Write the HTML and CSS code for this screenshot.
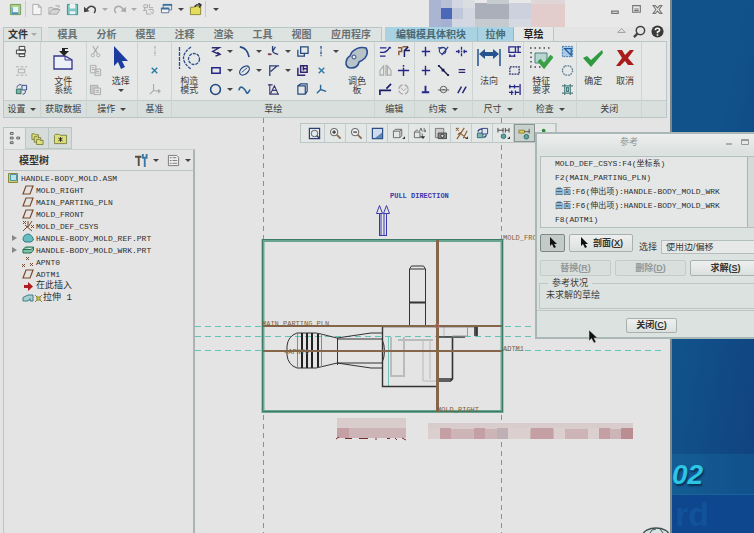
FILE: index.html
```html
<!DOCTYPE html>
<html lang="zh-CN">
<head>
    <meta charset="UTF-8">
    <meta name="viewport" content="width=device-width, initial-scale=1.0">
    <title>HANDLE-BODY_MOLD</title>
    <link rel="stylesheet" href="styles.css">
</head>
<body>
<div class="app">
    <header class="titlebar">
        <div class="quick">
            <button aria-label="窗口"><svg viewBox="0 0 14 14"><path fill="#a9cf7d" stroke="#6d9d5c" d="M1.500 1.500h11v11h-11z"/><path fill="#4b8bc4" d="M3 5h7v7H3z"/><path fill="#e8f3f5" d="M4 4h6v6H4z"/></svg></button>
            <span class="bar"></span>
            <button aria-label="新建"><svg viewBox="0 0 14 14"><path fill="#f4f4f2" stroke="#aaa" d="M3 1.500h6l3 3v8H3zM9 1.500v3h3"/></svg></button>
            <button aria-label="打开"><svg viewBox="0 0 14 14"><path fill="#d4d4d2" stroke="#aaa" d="M1 5h4l1 1h5v2M1 5v7h9l3-5H4l-3 5M8 3h4v2"/></svg></button>
            <button aria-label="保存"><svg viewBox="0 0 14 14"><path fill="#7cc6c4" stroke="#2f8f92" d="M1.500 1.500h11v11h-11z"/><path fill="#eef4f2" d="M4 1h6v5H4zM4 9h6v3H4z"/></svg></button>
            <button aria-label="撤消" class="drop"><svg viewBox="0 0 14 14"><path fill="none" stroke="#444" stroke-width="1.600" d="M3 7q3-5 7-3t1 7"/><path fill="#444" d="M0 4l6 5-6 1z"/></svg><i class="ghost"></i></button>
            <button aria-label="重做" class="drop"><svg viewBox="0 0 14 14"><path fill="none" stroke="#aaa" stroke-width="1.600" d="M11 7Q8 2 4 4t-1 7"/><path fill="#aaa" d="M14 4L8 9l6 1z"/></svg><i class="ghost"></i></button>
            <button aria-label="重新生成"><svg viewBox="0 0 14 14"><path fill="none" stroke="#aaa" d="M2 2h4v3H2zM8 1v4h4M1 8h4v4h5M7 7h5v4M3 5v3M9 9l3 3"/></svg></button>
            <button aria-label="窗口切换" class="drop"><svg viewBox="0 0 14 14"><path fill="#dfe8f0" stroke="#5d7396" d="M3.500 1.500h9v6h-9z"/><path fill="#f2f2f2" stroke="#5d7396" d="M1.500 5.500h8v5h-8z"/><path fill="#3d6f9d" d="M3 1h10v2H3zM1 5h9v2H1z"/></svg><i></i></button>
            <button aria-label="关闭窗口"><svg viewBox="0 0 14 14"><path fill="#e6dc5c" stroke="#8a8434" d="M1.500 4.500h4l1-1h6v9h-11z"/><path fill="none" stroke="#333" stroke-width="1.500" d="M6 4l2-2h4M10 0l3 2-2 3"/></svg></button>
            <span class="bar"></span>
            <button aria-label="自定义" class="more"><i></i></button>
        </div>
        <svg class="mosaic" viewBox="0 0 138 27">
            <path fill="#dadee0" d="M0 18h12v9H0zM34 0h12v8H34zM46 8h12v19H46z"/>
            <path fill="#a9b5d2" d="M0 0h12v8H0zM0 8h12v19H0z"/>
            <path fill="#b8c0d6" d="M12 0h11v8H12z"/>
            <path fill="#4d67b8" d="M12 8h11v11H12z"/>
            <path fill="#a5b0d2" d="M12 19h11v8H12z"/>
            <path fill="#bfc7da" d="M23 8h11v11H23z"/>
            <path fill="#d2d7e2" d="M23 0h11v8H23zM23 19h23v8H23zM34 8h12v11H34z"/>
            <path fill="#abafb9" d="M46 3h34v16H46z"/>
            <path fill="#c6cbd0" d="M58 0h22v4H58zM46 19h34v8H46z"/>
            <path fill="#cdd1dd" d="M80 3h22v16H80z"/>
            <path fill="#d6d9e2" d="M80 19h22v8H80z"/>
            <path fill="#e2cccc" d="M102 3h34v24h-34z"/>
            <path fill="#dfd7d7" d="M102 0h34v4h-34z"/>
        </svg>
        <div class="winbtns">
            <button aria-label="最小化"><svg viewBox="0 0 10 10"><path fill="none" stroke="#777" d="M1.500 6.500h6v2h-6z"/></svg></button>
            <button aria-label="还原"><svg viewBox="0 0 10 10"><path fill="none" stroke="#777" d="M1.500 1.500h7v6h-7zM3 4.500h4M3 6h4"/></svg></button>
            <button aria-label="关闭"><svg viewBox="0 0 10 10"><path fill="none" stroke="#777" d="M1 1.500h2l2 2 2-2h2L6.500 5 9 8.500H7l-2-2-2 2H1L3.500 5z"/></svg></button>
        </div>
    </header>

    <nav class="tabs">
        <button class="file">文件<i class="ghost"></i></button>
        <button>模具</button>
        <button>分析</button>
        <button>模型</button>
        <button>注释</button>
        <button>渲染</button>
        <button>工具</button>
        <button>视图</button>
        <button class="last">应用程序</button>
        <button class="hl wide">编辑模具体积块</button>
        <button class="hl">拉伸</button>
        <button class="active">草绘</button>
        <div class="help">
            <button aria-label="折叠"><svg viewBox="0 0 14 14"><path fill="none" stroke="#999" d="M3 8l4-4 4 4z"/></svg></button>
            <button aria-label="搜索"><svg viewBox="0 0 14 14"><circle cx="8" cy="6" r="4.500" fill="none" stroke="#444" stroke-width="1.600"/><path stroke="#444" stroke-width="2.500" d="M1 13l4-4"/></svg></button>
            <button aria-label="帮助"><svg viewBox="0 0 14 14"><circle cx="7" cy="7" r="6.500" fill="#3a3a3a"/><path fill="none" stroke="#fff" stroke-width="1.700" d="M4.500 5.500Q5 3.500 7 3.500t2.400 1.800Q9 7 7 7.500V9M7 10v1.600"/></svg></button>
        </div>
    </nav>

    <section class="ribbon">
        <div class="group">
            <div class="tools">
                <div class="icons">
                    <button aria-label="草绘设置"><svg viewBox="0 0 14 14"><path fill="#f2f2f2" stroke="#333" d="M4.500 1.500h6v4h-6zM1.500 5.500h10l-1 4h-9zM4.500 9.500h6v3h-6z"/></svg></button>
                    <button aria-label="参考"><svg viewBox="0 0 14 14"><path fill="none" stroke="#aaa" d="M1 3h3m2 0h3m2 0h2M3.500 5.500h7v4h-7zM1 12h3m2 0h3m2 0h2"/></svg></button>
                    <button aria-label="草绘视图"><svg viewBox="0 0 14 14"><path fill="#7fb3a4" stroke="#2e6b63" d="M1.500 6.500h5v5h-5z"/><path fill="#dce6f2" stroke="#31417c" d="M7.500 2.500h5v5h-5z"/><path fill="none" stroke="#2c4c80" d="M2 5q1-4 5-3M11 8q1 4-3 4"/></svg></button>
                </div>
            </div>
            <div class="caption">设置<i></i></div>
        </div>
        <div class="group">
            <div class="tools">
                <button class="big"><svg viewBox="0 0 24 24"><path fill="#eef0f8" stroke="#35358a" stroke-width="1.300" d="M3 10h11l7 4v9H3z"/><path fill="none" stroke="#35358a" d="M14 10v4h7"/><path fill="#222" d="M8 5h10l-5 5zM11 2h6v1h-3v3h-3z"/></svg>文件<br>系统</button>
            </div>
            <div class="caption">获取数据</div>
        </div>
        <div class="group">
            <div class="tools">
                <div class="icons">
                    <button aria-label="剪切"><svg viewBox="0 0 14 14"><path fill="none" stroke="#aaa" stroke-width="1.200" d="M4 1l5 8M10 1L5 9"/><circle cx="4" cy="11" r="1.700" fill="none" stroke="#aaa"/><circle cx="10" cy="11" r="1.700" fill="none" stroke="#aaa"/></svg></button>
                    <button aria-label="复制"><svg viewBox="0 0 14 14"><path fill="#e6e6e6" stroke="#aaa" d="M1.500 1.500h6v8h-6zM3 4h3M3 6h3M6.500 5.500h6v7h-6zM8 8h3M8 10h3"/></svg></button>
                    <button aria-label="粘贴"><svg viewBox="0 0 14 14"><path fill="#c8c8c8" stroke="#aaa" d="M1.500 2.500h8v9h-8z"/><path fill="#e6e6e6" stroke="#aaa" d="M5.500 5.500h7v7h-7zM7 8h4M7 10h4"/></svg></button>
                </div>
                <button class="big"><svg viewBox="0 0 24 24"><path fill="#1c3ca0" d="M5 0v20l4-4 3 7 4-2-3-6h6z"/></svg>选择<i></i></button>
            </div>
            <div class="caption">操作<i></i></div>
        </div>
        <div class="group">
            <div class="tools">
                <div class="icons">
                    <button aria-label="中心线"><svg viewBox="0 0 14 14"><path stroke="#999" stroke-dasharray="3 1 1 1" d="M7.500 1v12"/></svg></button>
                    <button aria-label="点"><svg viewBox="0 0 14 14"><path stroke="#2a7aa8" stroke-width="1.500" d="M4 4l6 6M10 4l-6 6"/></svg></button>
                    <button aria-label="坐标系"><svg viewBox="0 0 14 14"><path fill="none" stroke="#aaa" stroke-width="1.200" d="M6 1v7l7 1M11 7l2 2-2 2M6 8l-4 4"/></svg></button>
                </div>
            </div>
            <div class="caption">基准</div>
        </div>
        <div class="group">
            <div class="tools">
                <button class="big"><svg viewBox="0 0 24 24"><path fill="none" stroke="#2b4f8c" stroke-width="1.300" stroke-dasharray="4 1" d="M2.500 1v22"/><path fill="none" stroke="#2b4f8c" stroke-width="1.300" stroke-dasharray="3 1" d="M14 1Q-1 12 14 23"/><circle cx="17" cy="13" r="5.500" fill="none" stroke="#2b4f8c" stroke-width="1.300" stroke-dasharray="3 1"/></svg>构造<br>模式</button>
                <div class="icons sketch">
                    <button aria-label="线" class="drop"><svg viewBox="0 0 14 14"><path fill="none" stroke="#2a2a6e" stroke-width="1.500" d="M3 3h8L4 7l7 3M9 8l3 2-5 2"/></svg><i></i></button>
                    <button aria-label="矩形" class="drop"><svg viewBox="0 0 14 14"><path fill="none" stroke="#26268a" stroke-width="1.600" d="M3 4h9v6H3z"/></svg><i></i></button>
                    <button aria-label="圆" class="drop"><svg viewBox="0 0 14 14"><circle cx="7" cy="7" r="5.300" fill="none" stroke="#254a80" stroke-width="1.700"/></svg><i></i></button>
                    <button aria-label="弧" class="drop"><svg viewBox="0 0 14 14"><path fill="none" stroke="#254a80" stroke-width="1.700" d="M2 2q8 1 10 11"/></svg><i></i></button>
                    <button aria-label="椭圆" class="drop"><svg viewBox="0 0 14 14"><ellipse cx="7" cy="7" rx="6" ry="3.800" transform="rotate(-40 7 7)" fill="none" stroke="#254a80" stroke-width="1.400"/><path stroke="#254a80" d="M4 9l6-5"/></svg><i></i></button>
                    <button aria-label="样条"><svg viewBox="0 0 14 14"><path fill="none" stroke="#2a6598" stroke-width="1.800" d="M1 8q1-5 4-3t4 5 4-3"/></svg></button>
                    <button aria-label="圆角" class="drop"><svg viewBox="0 0 14 14"><path fill="none" stroke="#2b3f78" stroke-width="1.400" d="M6 1v5q0 3 6 4M1 10h4M9 2l-3 5"/><path fill="#8c4646" d="M1 9h3v2H1z"/></svg><i></i></button>
                    <button aria-label="倒角" class="drop"><svg viewBox="0 0 14 14"><path fill="none" stroke="#2b3f78" stroke-width="1.400" d="M3 13V2h10M4 8l7-6"/></svg><i></i></button>
                    <button aria-label="文本"><svg viewBox="0 0 14 14"><path fill="none" stroke="#3b3b72" stroke-width="1.200" d="M3 1v11h10M4 11l4-8 4 9M5 8h6M1 2h5"/></svg></button>
                    <button aria-label="偏移"><svg viewBox="0 0 14 14"><path fill="none" stroke="#254a80" stroke-width="1.400" d="M2 5v7h7V9M5 2h8v7H5z"/></svg></button>
                    <button aria-label="加厚"><svg viewBox="0 0 14 14"><path fill="none" stroke="#32246e" stroke-width="1.600" d="M2 4v8h8M5 2h7v7H5zM7 5h5M8 2v5"/></svg></button>
                    <button aria-label="投影"><svg viewBox="0 0 14 14"><path fill="none" stroke="#254a80" stroke-width="1.300" d="M2 3h8v9H2zM2 3l3-2h7v8l-2 3"/></svg></button>
                    <button aria-label="构造中心线" class="drop"><svg viewBox="0 0 14 14"><path stroke="#254a80" stroke-width="1.400" stroke-dasharray="3 1 1 1" d="M6.500 1v12"/></svg><i></i></button>
                    <button aria-label="构造点"><svg viewBox="0 0 14 14"><path stroke="#2a7aa8" stroke-width="1.500" d="M4 4l6 6M10 4l-6 6"/></svg></button>
                    <button aria-label="构造坐标系"><svg viewBox="0 0 14 14"><path fill="none" stroke="#2a6598" stroke-width="1.500" d="M6 2v5l6 2M6 7l-4 4"/></svg></button>
                </div>
                <button class="big"><svg viewBox="0 0 24 24"><path fill="#b7c2c9" stroke="#2b4f8c" stroke-width="1.600" d="M7 6Q13 0 21 2q3 5-1 10-2 2-6 4-1 6-8 6-4 0-5-4 0-6 4-8z"/><circle cx="9" cy="11" r="2" fill="#e8eef2" stroke="#2b4f8c"/></svg>调色<br>板</button>
            </div>
            <div class="caption">草绘</div>
        </div>
        <div class="group">
            <div class="tools">
                <div class="icons">
                    <button aria-label="修改"><svg viewBox="0 0 14 14"><path fill="none" stroke="#26268a" stroke-width="1.400" d="M1 3h7M10 3h3M1 8h4q4-1 7-6M1 12h6"/></svg></button>
                    <button aria-label="镜像"><svg viewBox="0 0 14 14"><path fill="none" stroke="#aaa" stroke-width="1.200" d="M1 12V7l4-5v10zM13 12V7L9 2v10zM7.500 1v12"/></svg></button>
                    <button aria-label="分割"><svg viewBox="0 0 14 14"><path fill="none" stroke="#1c1c6a" stroke-width="1.800" d="M1 13V8h7M13 1L8 6M5 8h8"/></svg></button>
                    <button aria-label="删除段"><svg viewBox="0 0 14 14"><path fill="none" stroke="#8a5a38" stroke-width="1.600" d="M1 3h4v4H2v4M6 2l6 0"/><path fill="none" stroke="#1c1c6a" stroke-width="1.600" d="M8 13V6h6M12 2l-4 4"/></svg></button>
                    <button aria-label="拐角"><svg viewBox="0 0 14 14"><path fill="none" stroke="#26268a" stroke-width="1.500" d="M1 7h12M7 4v9M7 1v2"/></svg></button>
                    <button aria-label="旋转"><svg viewBox="0 0 14 14"><circle cx="7" cy="7" r="5" fill="none" stroke="#aaa" stroke-width="1.300" stroke-dasharray="6 2"/><path fill="none" stroke="#aaa" d="M4 5l3 3 3-2"/></svg></button>
                </div>
            </div>
            <div class="caption">编辑</div>
        </div>
        <div class="group">
            <div class="tools">
                <div class="icons">
                    <button aria-label="竖直"><svg viewBox="0 0 14 14"><path stroke="#26268a" stroke-width="1.500" d="M7 2v10M3 7h9"/></svg></button>
                    <button aria-label="水平"><svg viewBox="0 0 14 14"><path stroke="#26268a" stroke-width="1.500" d="M7 2v10M3 7h9"/></svg></button>
                    <button aria-label="垂直"><svg viewBox="0 0 14 14"><path stroke="#26268a" stroke-width="2" d="M7 3v7M3 10h8"/></svg></button>
                    <button aria-label="相切"><svg viewBox="0 0 14 14"><circle cx="6" cy="6" r="3.500" fill="none" stroke="#2b3f88" stroke-width="1.300"/><path stroke="#2b3f88" stroke-width="1.300" d="M5 11l7-9M1 3h5"/></svg></button>
                    <button aria-label="中点"><svg viewBox="0 0 14 14"><path stroke="#1c1c4a" stroke-width="1.500" d="M2 2l10 10"/><path fill="#1c1c4a" d="M5 5h3v3H5zM1 1h2v2H1zM11 11h2v2h-2z"/></svg></button>
                    <button aria-label="重合"><svg viewBox="0 0 14 14"><circle cx="7" cy="7" r="3.500" fill="none" stroke="#555"/><path stroke="#555" d="M1 7.500h12M6 7h2"/></svg></button>
                    <button aria-label="对称"><svg viewBox="0 0 14 14"><path stroke="#26268a" stroke-width="1.400" d="M1 7h4M9 7h4M7 2v3M7 6v2M7 9v3M4 5v4M10 5v4"/></svg></button>
                    <button aria-label="相等"><svg viewBox="0 0 14 14"><path stroke="#26266a" stroke-width="1.500" d="M4 6h7M4 9h7"/></svg></button>
                    <button aria-label="平行"><svg viewBox="0 0 14 14"><path stroke="#26266a" stroke-width="1.600" d="M3 11l4-7M8 11l4-7"/></svg></button>
                </div>
            </div>
            <div class="caption">约束<i></i></div>
        </div>
        <div class="group">
            <div class="tools">
                <button class="big"><svg viewBox="0 0 24 24"><path stroke="#26528f" stroke-width="1.500" d="M1 3v17M23 3v17"/><path fill="#26528f" d="M2 8l6-5v3h8V3l6 5-6 5v-3H8v3z"/></svg>法向</button>
                <div class="icons">
                    <button aria-label="周长"><svg viewBox="0 0 14 14"><path fill="none" stroke="#26268a" stroke-width="1.400" d="M1 2h7v6H1zM11 1v7M9 2h5M9 8h5M1 12h7M2 10v3M7 10v3"/></svg></button>
                    <button aria-label="参考尺寸"><svg viewBox="0 0 14 14"><path fill="none" stroke="#26266a" stroke-width="1.400" stroke-dasharray="2 1" d="M2 3h10v8H2z"/></svg></button>
                    <button aria-label="基线"><svg viewBox="0 0 14 14"><path fill="none" stroke="#26268a" stroke-width="1.400" d="M13 1v12M1 4h11M2 2v4M7 2v4M1 10h5M8 10h4M4 8v5M8 8v5"/></svg></button>
                </div>
            </div>
            <div class="caption">尺寸<i></i></div>
        </div>
        <div class="group">
            <div class="tools">
                <button class="big"><svg viewBox="0 0 24 24"><path fill="none" stroke="#444" stroke-width="1.500" stroke-dasharray="1.500 3" d="M1 2h21M1 21h12M2 6v14"/><path fill="#b9d5d0" stroke="#4d8080" d="M6 7h12v10H6z"/><path fill="none" stroke="#3aa046" stroke-width="4" d="M10 14l5 6 8-10"/></svg>特征<br>要求</button>
                <div class="icons">
                    <button aria-label="重叠几何"><svg viewBox="0 0 14 14"><path fill="#a9c8e4" stroke="#3b78b0" stroke-dasharray="2 1" d="M1.500 1.500h11v11h-11z"/><path fill="none" stroke="#1d5c9c" stroke-width="1.300" d="M4 4l7 7V4z"/></svg></button>
                    <button aria-label="突出开放端"><svg viewBox="0 0 14 14"><path fill="none" stroke="#5b7b92" stroke-width="1.300" stroke-dasharray="2 1" d="M4 2h6l3 5-3 5H4L1 7z"/></svg></button>
                    <button aria-label="着色封闭环"><svg viewBox="0 0 14 14"><path fill="none" stroke="#4d8080" stroke-width="1.300" d="M1 3h12M1 11h12M4 1v12M10 1v12M6 5h2v4H6z"/></svg></button>
                </div>
            </div>
            <div class="caption">检查<i></i></div>
        </div>
        <div class="group">
            <div class="tools">
                <button class="big"><svg viewBox="0 0 24 24"><path fill="#2f9a40" d="M2 12l4-2 4 4L21 4l1 3-12 14z"/></svg>确定</button>
                <button class="big"><svg viewBox="0 0 24 24"><path fill="#a81c1c" d="M4 4h5l3 5 5-5h4l-6 8 6 7h-6l-3-4-5 5H3l6-8z"/></svg>取消</button>
            </div>
            <div class="caption">关闭</div>
        </div>
        <div class="group">
            <div class="tools"></div>
            <div class="caption"></div>
        </div>
    </section>

    <main class="work">
        <aside class="navigator">
            <div class="navtabs">
                <button class="on" aria-label="模型树"><svg viewBox="0 0 14 14"><path fill="none" stroke="#555" d="M2.500 .5h3v2h-3zM2.500 5.500h3v2h-3zM2.500 10.500h3v2h-3zM9.500 5.500h3v2h-3z"/></svg></button>
                <button aria-label="文件夹浏览器"><svg viewBox="0 0 14 14"><path fill="#dce07a" stroke="#7c8040" d="M1 2h3l1 1h3v5H1z"/><path fill="#dce07a" stroke="#7c8040" d="M3.500 5h3l1 1h3v5h-7z"/><path fill="#dce07a" stroke="#7c8040" d="M6 8h3l1 1h3v4.500H6z"/></svg></button>
                <button aria-label="收藏夹"><svg viewBox="0 0 14 14"><path fill="#dce07a" stroke="#7c8040" d="M.5 3.500l1-1h4l1 1h7v9H.5z"/><path stroke="#222" d="M7 5.500v5M4.800 6.500l4.400 3M9.200 6.500l-4.400 3"/></svg></button>
            </div>
            <div class="navhead">
                <h2>模型树</h2>
                <button aria-label="设置" class="drop"><svg viewBox="0 0 14 14"><path fill="none" stroke="#5a4b3c" stroke-width="2" d="M0 3h7M4 3v10"/><path fill="none" stroke="#3a7aa5" stroke-width="2" d="M8.500 0v4h4V0M10.500 4v10"/></svg><i></i></button>
                <button aria-label="显示" class="drop"><svg viewBox="0 0 14 14"><path fill="#eee" stroke="#777" d="M1.500 1.500h9l2 2v9h-11zM3 4h2M6 4h4M3 7h2M6 7h5M3 10h2M6 10h5"/></svg><i></i></button>
            </div>
            <ul class="tree">
                <li class="root"><svg viewBox="0 0 12 12"><path fill="#d8cf62" stroke="#8a8a3c" d="M1.500 1.500h9v9h-9z"/><path fill="#b8e2ea" stroke="#4b97a0" d="M3.500 2.500h6v6h-6z"/></svg>HANDLE-BODY_MOLD.ASM</li>
                <li><svg viewBox="0 0 12 12"><path fill="none" stroke="#7a4a28" stroke-width="1.200" d="M4 2h7L8 10H1z"/></svg>MOLD_RIGHT</li>
                <li><svg viewBox="0 0 12 12"><path fill="none" stroke="#7a4a28" stroke-width="1.200" d="M4 2h7L8 10H1z"/></svg>MAIN_PARTING_PLN</li>
                <li><svg viewBox="0 0 12 12"><path fill="none" stroke="#7a4a28" stroke-width="1.200" d="M4 2h7L8 10H1z"/></svg>MOLD_FRONT</li>
                <li><svg viewBox="0 0 12 12"><path fill="none" stroke="#7a4a28" d="M1 1l3 3M4 1L1 4M6 1v5L1 11M3 5l7 6M10 1L6 7M9 5l3 3M12 5L9 8"/></svg>MOLD_DEF_CSYS</li>
                <li class="closed"><svg viewBox="0 0 12 12"><path fill="#66bcc2" stroke="#2f7c80" d="M1 8q0-6 6-6 4 2 4.500 6L9 10H3z"/></svg>HANDLE-BODY_MOLD_REF.PRT</li>
                <li class="closed"><svg viewBox="0 0 12 12"><path fill="#7cc4a4" stroke="#2d6e58" d="M1 5.500L3.500 3h8v3L9 9H1zM1 5.500h8l2.500-2.500"/></svg>HANDLE-BODY_MOLD_WRK.PRT</li>
                <li><svg viewBox="0 0 12 12"><path fill="none" stroke="#7a4a28" d="M4 1l3 3M7 1L4 4M0 8l3 3M3 8l-3 3M8 7l3 3M11 7l-3 3"/></svg>APNT0</li>
                <li><svg viewBox="0 0 12 12"><path fill="none" stroke="#7a4a28" stroke-width="1.200" d="M4 2h7L8 10H1z"/></svg>ADTM1</li>
                <li class="cn"><svg viewBox="0 0 12 12"><path fill="#b01c22" d="M2 5h4V2l5 4.500L6 11V8H2z"/></svg>在此插入</li>
                <li class="cn feat"><svg viewBox="0 0 12 12"><path fill="#a9cfd2" stroke="#3d7f88" d="M1 5.500L6 3h5v6H8V6.500L6 9H1z"/></svg><svg class="star" viewBox="0 0 7 7"><path fill="#d9d34e" stroke="#8a8430" d="M2 2h3v3H2z"/><path stroke="#8a8430" d="M0 0l2 2M7 0L5 2M0 7l2-2M7 7L5 5"/></svg>拉伸 1</li>
            </ul>
        </aside>

        <section class="canvas">
            <svg class="scene" viewBox="195 118 475 415" preserveAspectRatio="xMinYMin meet">
                <g fill="none" stroke="#4fb08c" stroke-dasharray="5 4">
                    <path d="M263.500 118v415M501.500 118v415"/>
                    <path stroke="#62c4b4" stroke-dasharray="6 4" d="M195 326.500h468M195 336.500h368M195 350.500h468"/>
                </g>
                <path fill="none" stroke="#6aa590" stroke-width="3" d="M263 240.500h239v171H263z"/>
                <path fill="none" stroke="#3d7a68" d="M262.500 239.500h240v172h-240z"/>

                <g fill="none" stroke="#b8bcbc">
                    <path d="M388.500 337v49" stroke="#72c4b8"/>
                    <path stroke-width="2" d="M391 337v39h13v-39M398 340h35"/>
                    <path d="M423 341v40h14M430 341v38M444 326v10"/>
                </g>
                <g fill="none" stroke="#333">
                    <path d="M409.500 326v-57l2-3h12l2 3v57M410 269h15"/>
                    <path stroke-width="2" d="M410 302.500h15"/>
                    <path stroke-width="1.400" d="M437.500 386.500h-55v-60h94v9"/>
                    <path d="M382 333h-11l-34 5-16-4-5-1h-19q-9 3-10 13v9q1 10 10 13h19l17-4 4-1 34 5h11M337.500 338v27M382 339h-45M382 363h-45M382 339q5 12 0 24"/>
                    <path stroke="#222" stroke-width="2" d="M302 333v35M307 333v35M312 333v35M318 334v33"/>
                    <path stroke="#888" d="M297.500 333v35M321.500 334v33"/>
                    <path stroke-width="1.600" d="M438 337h27M452.500 338v41l-2 2H438M438 379h14M475 326v10M477 327v9"/>
                    <path d="M467.500 327v9h-15" stroke="#999"/>
                </g>
                <g fill="none" stroke="#85664a" stroke-width="2">
                    <path d="M263 326h239M263 351h239"/>
                    <path d="M437.500 240v172" stroke-width="3"/>
                </g>
                <circle cx="437" cy="326" r="2" fill="none" stroke="#c46a6a"/>
                <g fill="none" stroke="#3a3aae">
                    <path d="M379.500 235.500v-22h-3l3-8 3 8h-3M386.500 235.500v-22h-3l3-8 3 8h-3M379 235.500h8M381 213v22M384 213v22"/>
                </g>
                <g class="tag">
                    <text class="pull" x="390" y="198">PULL DIRECTION</text>
                    <text x="503" y="240">MOLD_FRONT</text>
                    <text x="262" y="326">MAIN_PARTING_PLN</text>
                    <text x="503" y="351">ADTM1</text>
                    <text x="284" y="354">×APNT0</text>
                    <text x="437" y="412">MOLD_RIGHT</text>
                </g>

                <path fill="#d9cccd" d="M337 418h69v10h-69zM428 423h205v7H428z"/>
                <path fill="#cdb4b6" d="M337 428h69v10h-69zM428 429h205v10H428z"/>
                <path fill="#c4a0a4" d="M337 428h12v10h-12zM440 428h11v11h-11zM474 428h11v11h-11zM531 428h22v11h-22zM599 428h11v11h-11z"/>
                <path fill="#dccfd0" d="M428 429h12v10h-12zM508 428h22v11h-22zM554 428h11v11h-11zM588 428h11v11h-11z"/>
                <path fill="#b98d92" d="M621 428h12v11h-12z"/>
                <path fill="#bfb0b5" d="M497 428h11v11h-11z"/>
                <path fill="none" stroke="#7a2c30" d="M336 439l3-2M345 438.500h7M359 438.500h9M376 438v2M387 438.500h3M395 438l2 2M402 438l4 2"/>

                <ellipse cx="656" cy="535" rx="13" ry="7" fill="#d8e2e2" stroke="#3d5252" stroke-width="1.500"/>
                <path fill="none" stroke="#3d5252" d="M650 533l2-3 4-1M660 529l3 4"/>
            </svg>
            <div class="viewbar">
                <button aria-label="重新调整"><svg viewBox="0 0 14 14"><path fill="none" stroke="#2c3f78" stroke-width="1.300" d="M1.500 1.500h11v11h-11z"/><circle cx="7" cy="7" r="3.500" fill="#dfe9f0" stroke="#555"/><path stroke="#2c3f78" stroke-width="1.500" d="M9.500 9.500l3 3"/></svg></button>
                <button aria-label="放大"><svg viewBox="0 0 14 14"><circle cx="5.500" cy="5.500" r="4" fill="#eef0f0" stroke="#555"/><path stroke="#333" stroke-width="1.300" d="M3.500 5.500h4M5.500 3.500v4"/><path stroke="#8a6a48" stroke-width="2" d="M8.500 8.500l4 4"/></svg></button>
                <button aria-label="缩小"><svg viewBox="0 0 14 14"><circle cx="5.500" cy="5.500" r="4" fill="#eef0f0" stroke="#555"/><path stroke="#333" stroke-width="1.300" d="M3.500 5.500h4"/><path stroke="#8a6a48" stroke-width="2" d="M8.500 8.500l4 4"/></svg></button>
                <button aria-label="重画"><svg viewBox="0 0 14 14"><path fill="#cfdcec" stroke="#2c4f88" stroke-width="1.300" d="M1.500 1.500h11v11h-11z"/><path fill="#5d86b8" d="M12 6v6H4z"/></svg></button>
                <button aria-label="显示样式"><svg viewBox="0 0 14 14"><path fill="none" stroke="#666" d="M1.500 4.500h7v7h-7zM1.500 4.500l2-2h7v7l-2 2M8.500 4.500l2-2"/><path fill="#333" d="M11 13h3v-3z"/></svg></button>
                <button aria-label="已命名视图"><svg viewBox="0 0 14 14"><path fill="none" stroke="#666" d="M1.500 5.500h6v6h-6zM1.500 5.500l2-2h2M10 7v4H7M7 5l1.500-4L10 5M12 1v4h1.500V3"/><path fill="#333" d="M8 10h5l-2 3z"/></svg></button>
                <button aria-label="视图管理器"><svg viewBox="0 0 14 14"><path fill="#ccc" stroke="#777" d="M1.500 1.500h9v10h-9z"/><path fill="#888" stroke="#444" d="M4.500 6.500h9v6h-9z"/><circle cx="9" cy="9.500" r="1.800" fill="#ddd" stroke="#333"/></svg></button>
                <button aria-label="基准显示"><svg viewBox="0 0 14 14"><path fill="none" stroke="#8c5a2c" stroke-width="1.200" d="M1 1l3 3M4 1L1 4M10 1L2 13M5 6l7 6M13 4L9 12M3 8l3-2"/><path fill="#333" d="M11 13h3v-3z"/></svg></button>
                <button aria-label="草绘视图方向"><svg viewBox="0 0 14 14"><path fill="#7fb3b4" stroke="#2e6b73" d="M1.500 6.500h6v5h-6z"/><path fill="#dce6f2" stroke="#31417c" d="M6.500 1.500h6v6h-6z"/><path fill="none" stroke="#31417c" stroke-width="1.300" d="M2 5q1-3 5-3M8 11q3 0 3-3"/></svg></button>
                <button aria-label="草绘器显示"><svg viewBox="0 0 14 14"><path fill="none" stroke="#444" d="M1 1v5M1 3.500h6M6.500 1v5M9 1v5M9 3.500h4M13 1v5"/><circle cx="7" cy="10" r="2.500" fill="#5fa39a" stroke="#2d6e68"/><path fill="#333" d="M11 13h3v-3z"/></svg></button>
                <button aria-label="注释显示" class="on"><svg viewBox="0 0 14 14"><path fill="#e8d35a" stroke="#8a7b30" d="M1 3.500h6v3H1z"/><path stroke="#555" d="M7 5h6M12 2v5"/><circle cx="9" cy="10.500" r="2.500" fill="#5fa39a" stroke="#2d6e68"/></svg></button>
                <button aria-label="旋转中心"><svg viewBox="0 0 14 14"><circle cx="5" cy="4" r="2" fill="#2f8a3c"/><path stroke="#2f8a3c" stroke-width="1.400" d="M5 5v4M7 8h5"/></svg></button>
            </div>
        </section>
    </main>
</div>

<aside class="desktop">
    <div class="band"><strong>02</strong></div>
    <span class="word">rd</span>
</aside>

<form class="dialog">
    <header>参考
        <span class="dlgbtns">
            <button type="button" aria-label="最小化"><svg viewBox="0 0 10 10"><path stroke="#999" stroke-width="1.500" d="M2 7h6"/></svg></button>
            <button type="button" aria-label="最大化"><svg viewBox="0 0 10 10"><path fill="none" stroke="#999" d="M1.500 2.500h7v5h-7zM1 3.500h8"/></svg></button>
        </span>
    </header>
    <div class="list">
        <ul>
            <li>MOLD_DEF_CSYS:F4(坐标系)</li>
            <li>F2(MAIN_PARTING_PLN)</li>
            <li>曲面:F6(伸出项):HANDLE-BODY_MOLD_WRK</li>
            <li>曲面:F6(伸出项):HANDLE-BODY_MOLD_WRK</li>
            <li>F8(ADTM1)</li>
        </ul>
        <div class="scroll"></div>
    </div>
    <div class="pick">
        <button type="button" class="arrow" aria-label="选择参考"><svg viewBox="0 0 10 12"><path fill="#111" d="M2 0v9l2-2 2 4 2-1-2-3h3z"/></svg></button>
        <button type="button" class="sec"><svg viewBox="0 0 10 12"><path fill="#111" d="M2 0v9l2-2 2 4 2-1-2-3h3z"/></svg><span>剖面(<u>X</u>)</span></button>
        <label for="pickMode">选择</label>
        <select id="pickMode"><option>使用边/偏移</option></select>
    </div>
    <div class="acts">
        <button type="button" disabled><span>替换(<u>R</u>)</span></button>
        <button type="button" disabled><span>删除(<u>D</u>)</span></button>
        <button type="button"><span>求解(<u>S</u>)</span></button>
    </div>
    <fieldset>
        <legend>参考状况</legend>
        <p>未求解的草绘</p>
    </fieldset>
    <footer><button type="button"><span>关闭(<u>C</u>)</span></button></footer>
</form>

<svg class="cursor" viewBox="0 0 10 14"><path fill="#111" stroke="#ddd" stroke-width=".5" d="M1 0v11l2.500-2.500L6 13l2-1-2-4h3.500z"/></svg>
</body>
</html>
```
FILE: styles.css
```css
* {
    box-sizing: border-box;
}
body {
    margin: 0;
    min-height: 100vh;
    display: flex;
    position: relative;
    overflow: hidden;
    font-family: "Liberation Sans", "Noto Sans CJK SC", sans-serif;
    font-size: 9px;
    line-height: 9px;
    color: #3c3c3c;
    background: #11508a;
}
button {
    display: flex;
    align-items: center;
    justify-content: center;
    padding: 0;
    border: 0;
    background: none;
    font: inherit;
    color: inherit;
}
svg {
    display: block;
    flex: none;
}
button svg {
    width: 13px;
    height: 13px;
}
/* drop-down arrow */
i {
    border: 3px solid transparent;
    border-top-color: #444;
    border-bottom: 0;
}
i.ghost {
    border-top-color: #aaa;
}

.app {
    flex: 1;
    min-width: 0;
    display: flex;
    flex-direction: column;
    background: #e4e4e4;
    border-right: 2px solid #7d8688;
}

/* title bar */
.titlebar {
    height: 27px;
    display: flex;
    align-items: flex-start;
    justify-content: space-between;
    background: #e7e8e7;
}
.quick {
    display: flex;
    align-items: center;
    height: 18px;
    padding-left: 6px;
}
.quick button {
    width: 18px;
}
.quick button.drop {
    width: 29px;
    gap: 5px;
}
.bar {
    width: 1px;
    height: 16px;
    margin: 0 1px;
    background: #c4cccc;
}
.mosaic {
    width: 138px;
    height: 27px;
    margin-left: 204px;
}
.winbtns {
    display: flex;
    gap: 10px;
    height: 18px;
    margin-left: auto;
    padding-right: 7px;
}
.winbtns svg {
    width: 11px;
    height: 11px;
}

/* ribbon tabs */
.tabs {
    display: flex;
    height: 14px;
    margin-left: 3px;
    font-size: 10px;
    font-weight: bold;
    color: #6b7070;
}
.tabs > button {
    width: 39px;
    background: #dde3e1;
    border-top: 1px solid #b9c6c3;
}
.tabs > .file {
    gap: 3px;
    margin-right: 6px;
    color: #333;
    border: 1px solid #b9c6c3;
    border-bottom: 0;
}
.tabs > .last {
    width: 61px;
    border-right: 1px solid #b9c6c3;
    margin-right: 3px;
}
.tabs > .hl {
    width: 36px;
    background: #a9d3e2;
    color: #4a6874;
    border-color: #a9d3e2;
    border-right: 1px solid #8fbccb;
}
.tabs > .wide {
    width: 93px;
}
.tabs > .active {
    width: 40px;
    background: #e6e8e7;
    color: #222;
    border: 0;
    border-right: 1px solid #b9c6c3;
}
.help {
    display: flex;
    gap: 5px;
    height: 8px;
    margin-left: auto;
    padding-right: 6px;
}

/* ribbon */
.ribbon {
    display: grid;
    grid-template-columns: 37fr 46fr 51fr 35fr 203fr 40fr 58fr 52fr 53fr 65fr 24fr;
    margin: 0 3px;
    border: 1px solid #b9c6c3;
    background: #e6e8e7;
}
.group {
    min-width: 0;
    border-right: 1px solid #ccd4d2;
}
.group:last-child {
    border-right: 0;
}
.tools {
    display: flex;
    justify-content: center;
    height: 58px;
    overflow: hidden;
}
.icons {
    display: grid;
    grid-template-rows: repeat(3, 19px);
    grid-auto-columns: 18px;
    grid-auto-flow: column;
}
.icons.sketch {
    grid-template-columns: 29px 29px 29px 19px 28px;
}
.sketch button {
    justify-content: flex-start;
    gap: 5px;
    padding-left: 3px;
}
.big {
    width: 34px;
    flex-direction: column;
    justify-content: flex-start;
    padding-top: 4px;
}
.big svg {
    width: 24px;
    height: 24px;
    margin-bottom: 7px;
}
.big i {
    margin-top: 3px;
}
.caption {
    display: flex;
    align-items: center;
    justify-content: center;
    gap: 5px;
    height: 17px;
    white-space: nowrap;
    background: #d8dfdd;
    border-top: 1px solid #c3cecb;
}

/* workspace */
.work {
    flex: 1;
    display: flex;
}
.navigator {
    width: 192px;
    margin-left: 3px;
    padding-top: 9px;
    display: flex;
    flex-direction: column;
}
.navtabs {
    display: flex;
    height: 22px;
}
.navtabs button {
    width: 23px;
    border: 1px solid #b9c6c3;
    border-left: 0;
    background: #d5dcda;
}
.navtabs .on {
    background: #e6e8e7;
    border-left: 1px solid #b9c6c3;
    border-bottom: 0;
}
.navhead {
    display: flex;
    align-items: center;
    gap: 8px;
    height: 22px;
    padding: 0 2px 0 15px;
    border: 1px solid #b9c6c3;
    border-right: 2px solid #aab4b4;
    border-top-color: #c9d2d0;
}
.navhead h2 {
    flex: 1;
    margin: 0;
    font-size: 10px;
    color: #333;
}
.navhead .drop {
    gap: 5px;
}
.tree {
    flex: 1;
    margin: 0;
    padding: 1px 0 0;
    list-style: none;
    border-left: 1px solid #b9c6c3;
    border-right: 2px solid #aab4b4;
}
.tree li, .list li {
    font-family: "Liberation Mono", "Noto Sans CJK SC", monospace;
    font-size: 8px;
    white-space: nowrap;
    color: #2e2e2e;
}
.tree li {
    display: flex;
    align-items: center;
    gap: 2px;
    height: 12px;
    padding-left: 18px;
}
.tree li svg {
    width: 12px;
    height: 12px;
}
.tree li .star {
    width: 7px;
    height: 7px;
}
.tree .root {
    padding-left: 3px;
}
.tree .closed {
    padding-left: 8px;
}
.tree .closed::before {
    content: "";
    width: 0;
    border: 3px solid transparent;
    border-left: 5px solid #888;
}
.tree .cn {
    font-size: 9px;
}
.tree .feat {
    gap: 1px;
}
.canvas {
    flex: 1;
    position: relative;
    min-width: 0;
}
.scene {
    width: 100%;
}
.tag text {
    font-family: "Liberation Mono", monospace;
    font-size: 7px;
    fill: #80603c;
}
.tag .pull {
    font-weight: bold;
    fill: #3a3aae;
}
.viewbar {
    position: absolute;
    top: 5px;
    left: 105px;
    display: flex;
    height: 20px;
    padding-left: 3px;
    border: 1px solid #bcc6c4;
    background: #e3e7e6;
}
.viewbar button {
    width: 21px;
    border-right: 1px solid #c3cccb;
}
.viewbar .on {
    background: #c9d1cf;
    border: 1px solid #8a9492;
}

/* desktop behind the window */
.desktop {
    width: 82px;
    display: flex;
    flex-direction: column;
    justify-content: flex-end;
    overflow: hidden;
    background: linear-gradient(100deg, #11528b 40%, #10417f);
}
.band {
    height: 41px;
    padding-top: 9px;
    background: linear-gradient(90deg, #145d94, #11508c);
    border-bottom: 1px solid #17639a;
}
.band strong {
    display: block;
    font-size: 28px;
    line-height: 24px;
    font-style: italic;
    font-weight: bold;
    color: #2cc5e6;
    text-shadow: 1px 2px 2px #0a2f55;
}
.word {
    height: 38px;
    padding-left: 3px;
    font-size: 34px;
    line-height: 38px;
    font-weight: bold;
    color: #11529a;
    background: #0e478d;
}

/* references dialog */
.dialog {
    position: absolute;
    top: 132px;
    right: -14px;
    width: 233px;
    padding: 0 5px;
    background: #dce2e0;
    border: 2px solid #a9b8b6;
}
.dialog header {
    position: relative;
    margin: 0 -5px 3px;
    height: 19px;
    padding-right: 45px;
    font-size: 9px;
    line-height: 17px;
    text-align: center;
    color: #8f9695;
    background: linear-gradient(#eceeed, #dce1df);
}
.dlgbtns {
    position: absolute;
    top: 3px;
    right: 16px;
    display: flex;
    gap: 6px;
}
.dlgbtns svg {
    width: 10px;
    height: 10px;
}
.list {
    display: flex;
    margin-left: -2px;
    border: 1px solid #b4bfbd;
    background: #e4e7e6;
}
.list ul {
    flex: 1;
    margin: 0;
    padding: 0 0 0 14px;
    list-style: none;
}
.list li {
    height: 14px;
    line-height: 14px;
}
.scroll {
    width: 13px;
    border-left: 1px solid #a9b4b2;
    background: #d3dad8;
}
.dialog button {
    border: 1px solid #a7b2b0;
    border-radius: 2px;
    background: linear-gradient(#eef0ef, #dbe0de);
    font-weight: bold;
    color: #333;
}
.dialog .dlgbtns button {
    border: 0;
    background: none;
}
.pick {
    display: flex;
    align-items: flex-end;
    gap: 4px;
    margin-left: -2px;
    padding: 6px 0;
}
.pick button {
    height: 18px;
    margin-bottom: 2px;
}
.dialog .arrow {
    width: 25px;
    background: #c3cbc9;
    border-color: #7d8886;
}
.pick svg {
    width: 10px;
    height: 12px;
}
.pick .sec {
    width: 64px;
    gap: 4px;
}
.pick label {
    padding: 0 0 2px 2px;
}
.pick select {
    flex: 1;
    height: 14px;
    padding: 0 4px;
    appearance: none;
    border: 1px solid #b4bfbd;
    border-radius: 0;
    background: #e6e9e8;
    font: inherit;
    color: #333;
}
.acts {
    display: flex;
    gap: 4px;
    margin-left: -2px;
}
.acts button {
    flex: 1;
    height: 16px;
}
.dialog button:disabled {
    color: #929998;
    border-color: #c3ccca;
    background: #d9dfdd;
}
.dialog fieldset {
    margin: 3px 0 0 -3px;
    padding: 0 6px 5px;
    border: 1px solid #bcc7c5;
}
.dialog legend {
    padding: 0 4px;
    margin-left: 2px;
}
.dialog fieldset p {
    margin: 3px 0;
}
.dialog footer {
    display: flex;
    justify-content: center;
    margin: 1px -5px 0;
    padding: 7px 0 4px;
    border-top: 1px solid #bcc7c5;
}
.dialog footer button {
    width: 51px;
    height: 15px;
}
.cursor {
    position: absolute;
    left: 588px;
    top: 330px;
    width: 10px;
    height: 14px;
}
```
